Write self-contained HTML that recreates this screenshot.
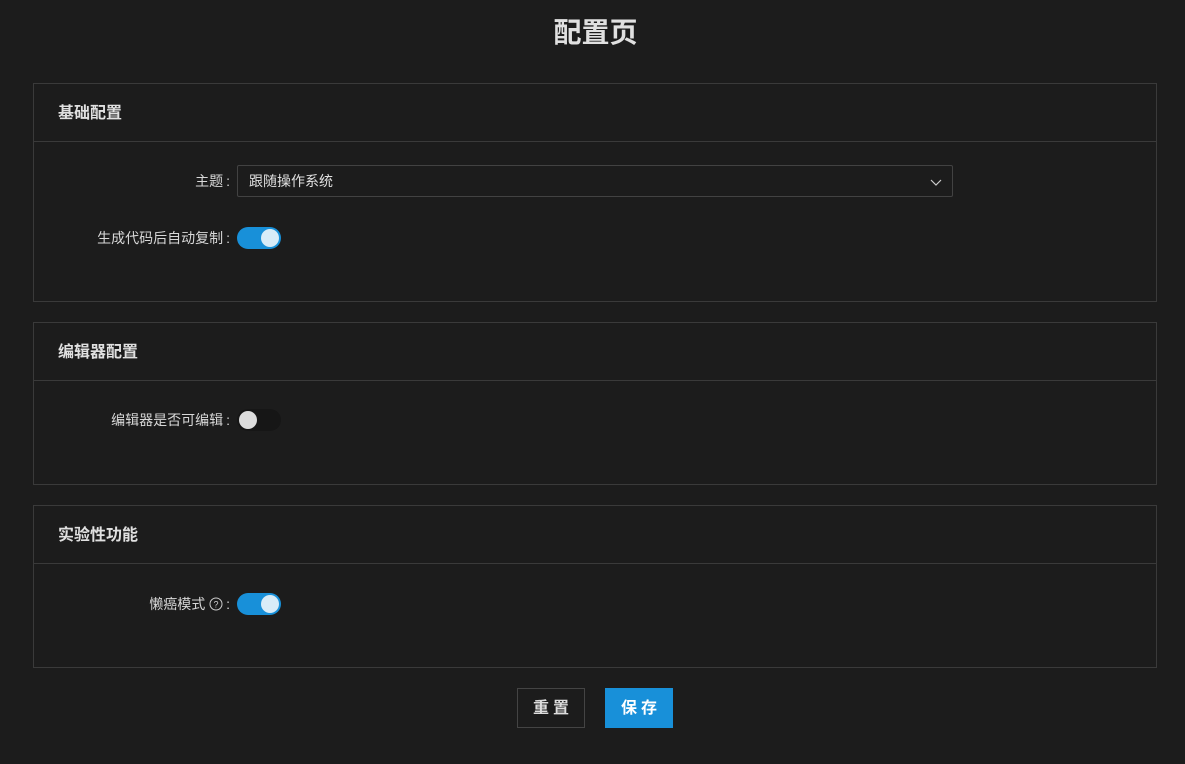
<!DOCTYPE html>
<html><head><meta charset="utf-8"><style>
*{box-sizing:border-box;margin:0;padding:0}
body{width:1185px;height:764px;background:#1c1c1c;color:#ddd;font-family:"Liberation Sans","Noto Sans CJK SC",sans-serif;position:relative;overflow:hidden}
h1{position:absolute;top:15px;left:3px;width:100%;text-align:center;font-size:28px;font-weight:bold;color:#e0e0e0;line-height:36px}
.card{position:absolute;left:33px;width:1124px;border:1px solid #3a3a3a}
.hd{height:58px;border-bottom:1px solid #3a3a3a;padding-left:24px;line-height:59px;font-size:16px;font-weight:bold;color:#e0e0e0}
.row{position:absolute;left:0;width:100%;height:32px}
.lbl{position:absolute;right:926px;top:0;line-height:32px;font-size:14px;color:#d8d8d8;white-space:nowrap}
.c{margin-left:3px}
.sel{position:absolute;left:203px;top:0;width:716px;height:32px;border:1px solid #424242;border-radius:2px;padding-left:11px;line-height:31px;font-size:14px;color:#e0e0e0}
.sel svg{position:absolute;right:10px;top:10px}
.sw{position:absolute;left:203px;top:5px;width:44px;height:22px;border-radius:11px;background:#1890d9}
.sw::after{content:"";position:absolute;top:2px;left:24px;width:18px;height:18px;border-radius:50%;background:#d8ecf8}
.sw.off{background:#161616}
.sw.off::after{left:2px;background:#ddd}
.btn{position:absolute;top:688px;height:40px;width:68px;font-size:16px;line-height:40px;text-align:center;letter-spacing:4px;text-indent:4px;font-weight:bold}
</style></head><body>
<h1>配置页</h1>
<div class="card" style="top:83px;height:219px">
<div class="hd">基础配置</div>
<div class="row" style="top:81px"><span class="lbl">主题<span class="c">:</span></span><div class="sel">跟随操作系统<svg width="12" height="12" viewBox="0 0 12 12"><path d="M1 4l5 5 5-5" stroke="#ccc" fill="none" stroke-width="1.2"/></svg></div></div>
<div class="row" style="top:138px"><span class="lbl">生成代码后自动复制<span class="c">:</span></span><div class="sw"></div></div>
</div>
<div class="card" style="top:322px;height:163px">
<div class="hd">编辑器配置</div>
<div class="row" style="top:81px"><span class="lbl">编辑器是否可编辑<span class="c">:</span></span><div class="sw off"></div></div>
</div>
<div class="card" style="top:505px;height:163px">
<div class="hd">实验性功能</div>
<div class="row" style="top:82px"><span class="lbl">懒癌模式 <svg width="14" height="14" viewBox="0 0 14 14" style="vertical-align:-2px"><circle cx="7" cy="7" r="6" stroke="#ccc" fill="none"/><text x="7" y="10.5" font-size="9" fill="#ccc" text-anchor="middle" font-family="Liberation Sans">?</text></svg><span class="c">:</span></span><div class="sw"></div></div>
</div>
<div class="btn" style="left:517px;border:1px solid #444;color:#ddd">重置</div>
<div class="btn" style="left:605px;background:#1890d9;color:#fff;border:1px solid #1890d9">保存</div>
</body></html>
